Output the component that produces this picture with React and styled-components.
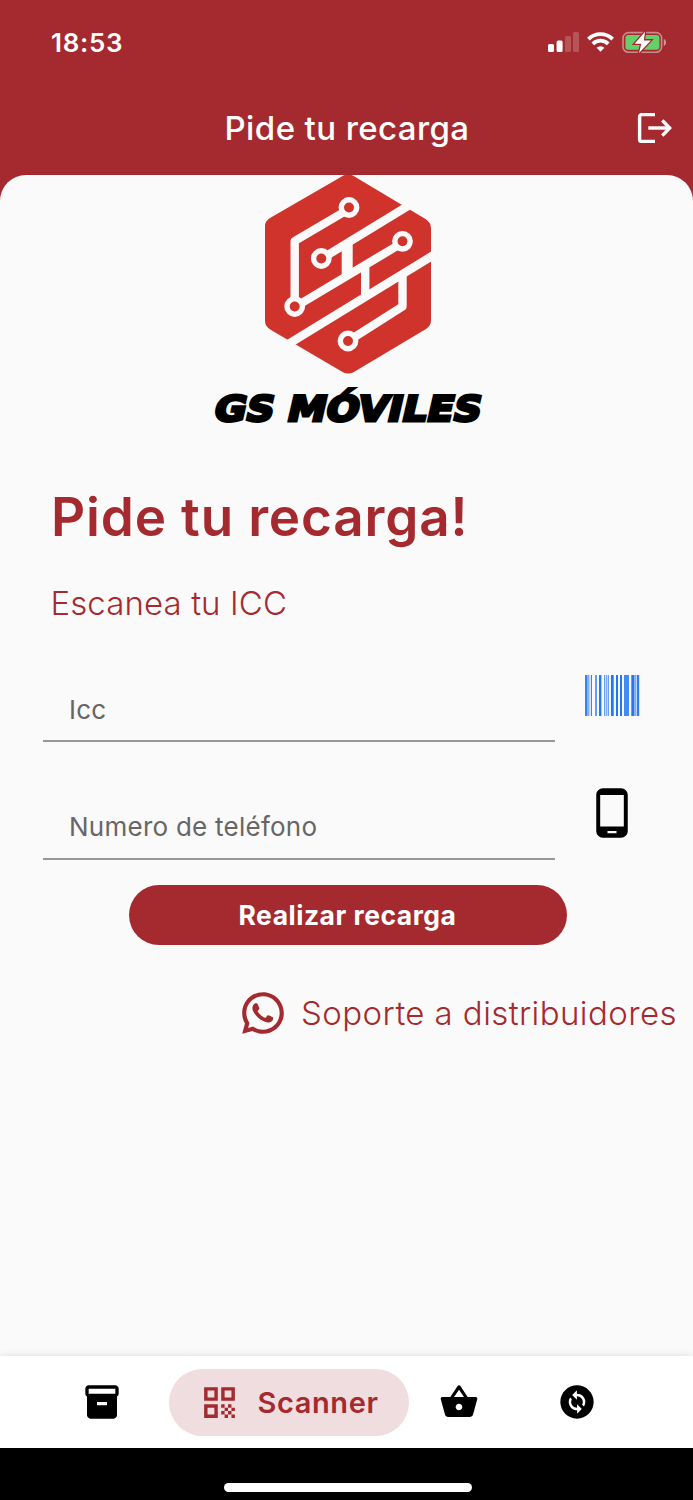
import React, { useState } from 'react';
import styled, { createGlobalStyle } from 'styled-components';
import {
  MdInventory2,
  MdQrCode,
  MdShoppingBasket,
  MdChangeCircle,
  MdPhoneAndroid
} from 'react-icons/md';
import { RiWhatsappLine } from 'react-icons/ri';

const RED = '#a52a2f';
const LOGO_RED = '#d0332b';
const PAPER = '#fafafa';

const tabs = [
  { id: 'inventory', label: 'Inventario', Icon: MdInventory2 },
  { id: 'scanner', label: 'Scanner', Icon: MdQrCode },
  { id: 'shop', label: 'Tienda', Icon: MdShoppingBasket },
  { id: 'change', label: 'Cambios', Icon: MdChangeCircle }
];

// [x, width, opacity] of every barcode stripe
const stripes = [
  [0, 2, 0.9],
  [2, 2, 0.55],
  [4, 1.5, 0.3],
  [6, 1, 0.9],
  [10, 2, 0.7],
  [14, 2.4, 1],
  [19, 1.2, 0.7],
  [20.8, 1.2, 0.55],
  [22.6, 1.4, 0.7],
  [26, 2.7, 1],
  [31, 2, 1],
  [35, 2, 1],
  [39, 3, 0.85],
  [42, 2, 0.85],
  [46.3, 3, 1],
  [49.5, 2, 0.6],
  [52, 2.2, 0.95]
];

const SignalIcon = () => (
  <svg width="31" height="20" viewBox="0 0 31 20" fill="#fff">
    <rect x="0" y="12" width="6" height="8" rx="1.5" />
    <rect x="8.6" y="8.5" width="6" height="11.5" rx="1.5" />
    <rect x="17" y="4" width="6" height="16" rx="1.5" opacity="0.2" />
    <rect x="25" y="0" width="6" height="20" rx="1.5" opacity="0.2" />
  </svg>
);

const WifiIcon = () => (
  <svg width="27" height="20" viewBox="0 0 27 20" fill="none" stroke="#fff" strokeWidth="3.8">
    <path d="M1.4 7.1a17.2 17.2 0 0 1 24.2 0" />
    <path d="M5.8 11.9a10.9 10.9 0 0 1 15.4 0" />
    <path d="M13.5 19.8l-3.9-4a5.7 5.7 0 0 1 7.8 0z" fill="#fff" stroke="none" />
  </svg>
);

const BatteryIcon = () => (
  <svg width="45" height="24" viewBox="0 0 45 24">
    <rect x="1" y="2.6" width="38.6" height="19.6" rx="5.5" fill="none" stroke="#fff" strokeOpacity="0.45" strokeWidth="1.6" />
    <rect x="3.4" y="5" width="34" height="14.8" rx="3" fill="#65d06a" />
    <path d="M41.8 9v7c1.4-.6 2.2-1.9 2.2-3.5S43.2 9.6 41.8 9z" fill="#fff" fillOpacity="0.5" />
    <path
      d="M23 1.8L12.6 13.8h6.7L17 23l11.8-12.6h-7z"
      fill="#fff"
      stroke={RED}
      strokeWidth="2.6"
      paintOrder="stroke"
    />
  </svg>
);

const LogoutIcon = () => (
  <svg width="36" height="32" viewBox="0 0 36 32" fill="none" stroke="#fff" strokeWidth="3.4">
    <path d="M18 2.6H4.6a2 2 0 0 0-2 2v22.8a2 2 0 0 0 2 2H18" />
    <path d="M11.3 16h22" />
    <path d="M25.3 8.4L32.6 16l-7.3 7.6" />
  </svg>
);

const Emblem = () => (
  <svg width="168" height="200" viewBox="264 175 168 200">
    <path
      d="M343.5 175.5q4.7-2.2 9.3 0L425.5 219q5.5 3.5 5.5 9v92q0 6-5 9l-72.5 43.2q-5.3 2.6-10.5 0l-72-42.2q-6-3.5-6-9V226q0-5 5-8z"
      fill={LOGO_RED}
    />
    <g fill="none" stroke={PAPER} strokeWidth="8.4">
      <path d="M326 256L420 198.7" />
      <path d="M280 349.2L445 248" />
      <path d="M344 212L294.7 241v60" strokeLinejoin="round" />
      <path d="M300 304L397 246" />
      <path d="M347.2 244v31" strokeWidth="11" />
      <path d="M365.2 264v34" />
      <path d="M402.5 274v32.5L353 338" strokeLinejoin="round" />
    </g>
    <g fill={LOGO_RED} stroke={PAPER} strokeWidth="5.4">
      <circle cx="349" cy="207.5" r="7.7" />
      <circle cx="321.3" cy="258.5" r="7.7" />
      <circle cx="402.5" cy="241.3" r="7.7" />
      <circle cx="294.7" cy="306.5" r="7.7" />
      <circle cx="348" cy="341" r="7.7" />
    </g>
  </svg>
);

const Barcode = () => (
  <svg width="55" height="41" viewBox="0 0 55 41" fill="#2477f2">
    {stripes.map(([x, width, opacity]) => (
      <rect key={x} x={x} y="0" width={width} height="41" opacity={opacity} />
    ))}
  </svg>
);

const App = () => {
  const [active, setActive] = useState('scanner');
  const [form, setForm] = useState({ icc: '', phone: '' });

  const handleChange = (e) => {
    setForm({ ...form, [e.target.id]: e.target.value });
  };

  return (
    <Screen>
      <GlobalStyle />
      <StatusBar>
        <Clock>18:53</Clock>
        <StatusIcons>
          <SignalIcon />
          <WifiIcon />
          <BatteryIcon />
        </StatusIcons>
      </StatusBar>
      <Header>
        <HeaderTitle>Pide tu recarga</HeaderTitle>
        <IconButton type="button" aria-label="Salir">
          <LogoutIcon />
        </IconButton>
      </Header>

      <Sheet>
        <Brand>
          <Emblem />
          <svg width="280" height="50" viewBox="0 0 280 50" overflow="visible">
            <Wordmark x="13.5" y="40" textLength="267" lengthAdjust="spacingAndGlyphs" transform="skewX(-13)">
              GS MÓVILES
            </Wordmark>
          </svg>
        </Brand>

        <Title>Pide tu recarga!</Title>
        <Subtitle>Escanea tu ICC</Subtitle>

        <form onSubmit={(e) => e.preventDefault()} autoComplete="off">
          <Field>
            <Input id="icc" placeholder="Icc" value={form.icc} onChange={handleChange} />
            <FieldIcon>
              <Barcode />
            </FieldIcon>
          </Field>
          <Field>
            <Input id="phone" placeholder="Numero de teléfono" value={form.phone} onChange={handleChange} />
            <FieldIcon>
              <MdPhoneAndroid size={54} />
            </FieldIcon>
          </Field>
          <SubmitButton type="submit">Realizar recarga</SubmitButton>
        </form>

        <Support>
          <RiWhatsappLine size={50} />
          <span>Soporte a distribuidores</span>
        </Support>
      </Sheet>

      <TabBar>
        {tabs.map(({ id, label, Icon }) => (
          <Tab key={id} type="button" aria-label={label} $active={id === active} onClick={() => setActive(id)}>
            <Icon size={id === active ? 41 : 40} />
            {id === active && <TabLabel>{label}</TabLabel>}
          </Tab>
        ))}
      </TabBar>
      <HomeArea>
        <HomeIndicator />
      </HomeArea>
    </Screen>
  );
};

const GlobalStyle = createGlobalStyle`
  * {
    box-sizing: border-box;
  }

  body {
    margin: 0;
    font-family: Inter, 'Liberation Sans', sans-serif;
  }

  svg {
    display: block;
    flex-shrink: 0;
  }
`;

const Screen = styled.div`
  display: flex;
  flex-direction: column;
  width: 693px;
  height: 1500px;
  overflow: hidden;
  background: ${RED};
`;

const StatusBar = styled.div`
  display: flex;
  align-items: center;
  justify-content: space-between;
  height: 84px;
  padding: 0 26px 0 51px;
  color: #fff;
`;

const Clock = styled.span`
  font-size: 26px;
  font-weight: 600;
  letter-spacing: 0.7px;
`;

const StatusIcons = styled.div`
  display: flex;
  align-items: center;
  gap: 8px;
`;

const Header = styled.header`
  display: grid;
  grid-template-columns: 60px 1fr 60px;
  align-items: center;
  height: 91px;
  padding-bottom: 3px;
  color: #fff;
`;

const HeaderTitle = styled.h2`
  grid-column: 2;
  margin: 0;
  padding-left: 1px;
  font-size: 33px;
  font-weight: 500;
  letter-spacing: 0.4px;
  line-height: 40px;
  text-align: center;
`;

const IconButton = styled.button`
  padding: 0 0 0 4px;
  border: none;
  background: none;
  cursor: pointer;
`;

const Sheet = styled.main`
  flex: 1;
  border-radius: 26px 26px 0 0;
  background: ${PAPER};
`;

const Brand = styled.div`
  display: flex;
  flex-direction: column;
  align-items: center;
  gap: 6px;
  padding-left: 2px;
`;

const Wordmark = styled.text`
  font-family: 'DejaVu Sans', sans-serif;
  font-size: 35px;
  font-weight: 700;
  fill: #000;
  stroke: #000;
  stroke-width: 3px;
`;

const Title = styled.h1`
  margin: 54px 0 0 51px;
  color: ${RED};
  font-size: 53px;
  font-weight: 600;
  letter-spacing: 0.85px;
  line-height: 64px;
`;

const Subtitle = styled.p`
  margin: 33px 0 0 50.5px;
  color: ${RED};
  font-size: 33px;
  font-weight: 300;
  letter-spacing: 0.1px;
  line-height: 42.5px;
`;

const Field = styled.div`
  display: flex;
  height: 117.5px;
  padding-left: 43px;
`;

const Input = styled.input`
  width: 512px;
  padding: 54px 26px 0;
  border: none;
  border-bottom: 2px solid #979797;
  background: none;
  font-family: inherit;
  font-size: 26px;
  letter-spacing: 0.25px;
  outline: none;

  &::placeholder {
    color: #666;
    opacity: 1;
  }
`;

const FieldIcon = styled.div`
  display: flex;
  align-items: center;
  justify-content: center;
  width: 114px;
  padding-top: 24px;
`;

const SubmitButton = styled.button`
  display: block;
  width: 438px;
  height: 60px;
  margin: 25.5px auto 0 128.5px;
  border: none;
  border-radius: 30px;
  background: ${RED};
  color: #fff;
  font-family: inherit;
  font-size: 26.5px;
  font-weight: 700;
  letter-spacing: 0.5px;
  cursor: pointer;
`;

const Support = styled.div`
  display: flex;
  align-items: center;
  justify-content: flex-end;
  gap: 13px;
  margin-top: 43px;
  padding-right: 16px;
  color: ${RED};
  font-size: 33px;
  font-weight: 300;
  letter-spacing: 0.42px;
  white-space: nowrap;
`;

const TabBar = styled.nav`
  display: flex;
  align-items: center;
  height: 92px;
  padding-left: 43px;
  background: #fff;
  box-shadow: 0 0 8px rgba(0, 0, 0, 0.12);
`;

const Tab = styled.button`
  display: flex;
  align-items: center;
  justify-content: center;
  gap: 17px;
  width: ${({ $active }) => ($active ? '240px' : '118px')};
  height: 67px;
  margin: ${({ $active }) => ($active ? '0 -9px 0 8px' : '0')};
  padding: 0;
  border: none;
  border-radius: 34px;
  background: ${({ $active }) => ($active ? '#efdddf' : 'none')};
  color: ${({ $active }) => ($active ? RED : '#000')};
  font-family: inherit;
  cursor: pointer;
`;

const TabLabel = styled.span`
  font-size: 29px;
  font-weight: 600;
  letter-spacing: 0.6px;
`;

const HomeArea = styled.div`
  display: flex;
  justify-content: center;
  height: 52px;
  padding: 35px 0 0 2px;
  background: #000;
`;

const HomeIndicator = styled.div`
  width: 248px;
  height: 9px;
  border-radius: 5px;
  background: #fff;
`;

export default App;
